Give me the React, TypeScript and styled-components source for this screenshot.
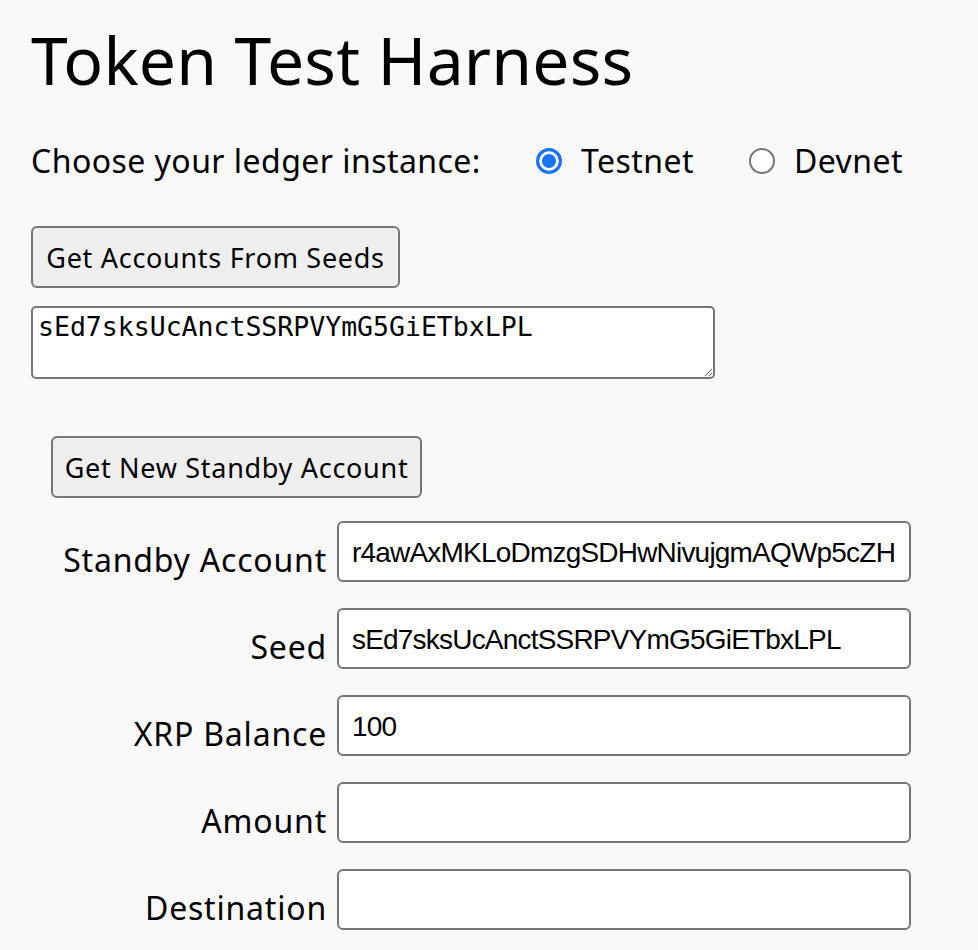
import React, { useState } from "react";
import styled, { createGlobalStyle } from "styled-components";

const GlobalStyle = createGlobalStyle`
  html, body {
    margin: 0;
    padding: 0;
    background: #f9f9f9;
  }
  body {
    font-family: "Noto Sans", "Open Sans", sans-serif;
    color: #000;
  }
`;

const Page = styled.div`
  padding: 19px 0 0 31px;
`;

const Title = styled.h1`
  margin: 0;
  font-size: 66px;
  line-height: 80px;
  font-weight: 400;
  letter-spacing: 0.2px;
`;

const LedgerRow = styled.div`
  display: flex;
  align-items: center;
  margin-top: 42px;
  height: 40px;
  font-size: 32px;
  line-height: 40px;
  letter-spacing: 0.45px;
`;

const LedgerLabel = styled.span`
  margin-right: 55px;
`;

const RadioLabel = styled.label`
  display: flex;
  align-items: center;
  gap: 19px;
  margin-right: 55px;
  cursor: pointer;
`;

const Radio = styled.input.attrs({ type: "radio" })`
  appearance: none;
  margin: 0;
  width: 26px;
  height: 26px;
  border-radius: 50%;
  border: 2px solid #767676;
  background: #fff;
  box-sizing: border-box;
  &:checked {
    border: 3px solid #1a73f8;
    background: #1a73f8;
    box-shadow: inset 0 0 0 3px #fff;
  }
`;

const Button = styled.button<{ $indent?: number }>`
  display: block;
  margin-left: ${(p) => p.$indent ?? 0}px;
  height: 62px;
  padding: 0;
  white-space: nowrap;
  font-family: "Noto Sans", "Open Sans", sans-serif;
  font-size: 27px;
  letter-spacing: 0.7px;
  color: #000;
  background: #efefef;
  border: 2px solid #767676;
  border-radius: 6px;
`;

const SeedsButton = styled(Button)`
  margin-top: 45px;
  width: 369px;
`;

const StandbyButton = styled(Button)`
  margin-top: 57px;
  width: 371px;
`;

const SeedsArea = styled.textarea`
  display: block;
  box-sizing: border-box;
  margin-top: 18px;
  width: 684px;
  height: 73px;
  padding: 3px 5px;
  font-family: "DejaVu Sans Mono", "Liberation Mono", monospace;
  font-size: 26.5px;
  line-height: 32px;
  border: 2px solid #767676;
  border-radius: 5px;
  background: #fff;
  color: #000;
`;

const Form = styled.div`
  display: grid;
  grid-template-columns: 296px 574px;
  grid-auto-rows: 61px;
  column-gap: 10px;
  row-gap: 26px;
  margin-top: 23px;
`;

const FieldLabel = styled.label`
  align-self: end;
  text-align: right;
  font-size: 32px;
  letter-spacing: 0.8px;
  line-height: 40px;
  padding-bottom: 2px;
  white-space: nowrap;
`;

const Field = styled.input`
  box-sizing: border-box;
  width: 574px;
  height: 61px;
  margin: 0;
  padding: 2px 12px 0 13px;
  font-family: "Liberation Sans", Arial, sans-serif;
  font-size: 28px;
  letter-spacing: -0.8px;
  color: #000;
  background: #fff;
  border: 2px solid #767676;
  border-radius: 6px;
`;

const fields = [
  { label: "Standby Account", value: "r4awAxMKLoDmzgSDHwNivujgmAQWp5cZH" },
  { label: "Seed", value: "sEd7sksUcAnctSSRPVYmG5GiETbxLPL" },
  { label: "XRP Balance", value: "100" },
  { label: "Amount", value: "" },
  { label: "Destination", value: "" },
];

export default function App() {
  const [ledger, setLedger] = useState("testnet");
  return (
    <Page>
      <GlobalStyle />
      <Title>Token Test Harness</Title>
      <LedgerRow>
        <LedgerLabel>Choose your ledger instance:</LedgerLabel>
        <RadioLabel>
          <Radio
            name="ledger"
            checked={ledger === "testnet"}
            onChange={() => setLedger("testnet")}
          />
          Testnet
        </RadioLabel>
        <RadioLabel>
          <Radio
            name="ledger"
            checked={ledger === "devnet"}
            onChange={() => setLedger("devnet")}
          />
          Devnet
        </RadioLabel>
      </LedgerRow>
      <SeedsButton>Get Accounts From Seeds</SeedsButton>
      <SeedsArea defaultValue="sEd7sksUcAnctSSRPVYmG5GiETbxLPL" />
      <StandbyButton $indent={20}>Get New Standby Account</StandbyButton>
      <Form>
        {fields.map((f) => (
          <React.Fragment key={f.label}>
            <FieldLabel>{f.label}</FieldLabel>
            <Field defaultValue={f.value} />
          </React.Fragment>
        ))}
      </Form>
    </Page>
  );
}
